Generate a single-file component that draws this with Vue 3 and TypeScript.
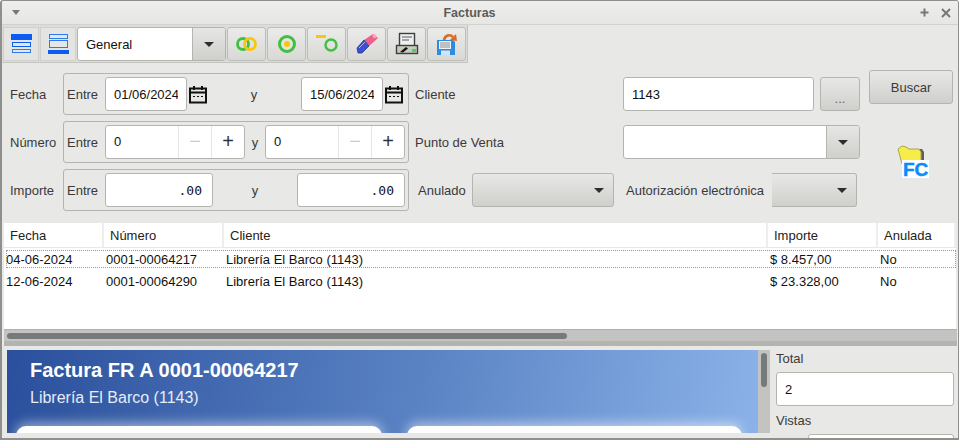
<script setup lang="ts">
const columns = [
  { label: 'Fecha', width: 100 },
  { label: 'Número', width: 120 },
  { label: 'Cliente', width: 544 },
  { label: 'Importe', width: 110 },
  { label: 'Anulada', width: 78 }
]

const rows = [
  { fecha: '04-06-2024', numero: '0001-00064217', cliente: 'Librería El Barco (1143)', importe: '$ 8.457,00', anulada: 'No', focus: true },
  { fecha: '12-06-2024', numero: '0001-00064290', cliente: 'Librería El Barco (1143)', importe: '$ 23.328,00', anulada: 'No', focus: false }
]
</script>

<template>
  <div class="window">
    <header class="titlebar">
      <svg class="menu-arrow" width="10" height="6" viewBox="0 0 10 6"><path d="M1 0h8L5 5z" fill="#77786f" /></svg>
      <span class="title">Facturas</span>
      <span class="win-btn">
        <svg width="9" height="9" viewBox="0 0 9 9"><path d="M4.500 0.500v8M0.500 4.500h8" stroke="#777874" stroke-width="2" /></svg>
      </span>
      <span class="win-btn">
        <svg width="10" height="10" viewBox="0 0 10 10"><path d="M1 1l8 8M9 1l-8 8" stroke="#777874" stroke-width="2" /></svg>
      </span>
    </header>

    <div class="toolbar">
      <button class="tool tool-view">
        <svg width="23" height="22" viewBox="0 0 23 22">
          <rect x="1" y="1" width="21" height="6" fill="#0a5df0" />
          <rect x="2.500" y="9.500" width="18" height="4" fill="#e6e6e4" stroke="#0a5df0" />
          <rect x="2.500" y="16.500" width="18" height="3" fill="#e6e6e4" stroke="#2a7bf0" />
        </svg>
      </button>
      <button class="tool tool-view">
        <svg width="23" height="22" viewBox="0 0 23 22">
          <rect x="2.500" y="1.500" width="18" height="4" fill="#e6e6e4" stroke="#2a7bf0" />
          <rect x="2.500" y="7.500" width="18" height="7" fill="#e6e6e4" stroke="#2a7bf0" />
          <rect x="1" y="17" width="21" height="4" fill="#0a5df0" />
        </svg>
      </button>
      <div class="combo toolbar-combo">
        <span class="combo-text">General</span>
        <span class="combo-arrow"><i class="arrow"></i></span>
      </div>
      <button class="tool">
        <svg width="24" height="18" viewBox="0 0 24 18">
          <circle cx="8" cy="9" r="5.500" fill="none" stroke="#3fc03f" stroke-width="2.800" />
          <circle cx="15" cy="9" r="5.500" fill="none" stroke="#f7c70f" stroke-width="2.800" />
        </svg>
      </button>
      <button class="tool">
        <svg width="20" height="20" viewBox="0 0 20 20">
          <circle cx="10" cy="10" r="7.500" fill="#e4e4e1" stroke="#3fc03f" stroke-width="3" />
          <circle cx="10" cy="10" r="3" fill="#f7c70f" />
        </svg>
      </button>
      <button class="tool">
        <svg width="24" height="20" viewBox="0 0 24 20">
          <rect x="1" y="1" width="10" height="3" fill="#f7c70f" />
          <circle cx="16" cy="11" r="5.500" fill="none" stroke="#3fc03f" stroke-width="2.400" />
        </svg>
      </button>
      <button class="tool">
        <svg width="24" height="22" viewBox="0 0 24 22">
          <path d="M9 7L18 1l5 4-9 8z" fill="#ee5f8a" />
          <path d="M17 2.500l3 -1.500 2 3-3 1.500z" fill="#f8a8c0" />
          <path d="M2 15l7-8 5 6-7 7H3z" fill="#3b4fd0" stroke="#26349a" stroke-width="0.800" />
          <path d="M4 15l6-6" stroke="#aab6f0" />
        </svg>
      </button>
      <button class="tool">
        <svg width="24" height="24" viewBox="0 0 24 24">
          <rect x="4.500" y="1.500" width="15" height="13" fill="#eef0f0" stroke="#3e3e3c" stroke-width="1.400" />
          <path d="M7 5h10M7 8h7" stroke="#8a8d8e" stroke-width="1.500" />
          <rect x="1.500" y="13.500" width="21" height="8" fill="#c9cabc" stroke="#3e3e3c" stroke-width="1.400" />
          <path d="M5 20l6-5 2 1.500-5 4z" fill="#111" />
          <rect x="17" y="17" width="4" height="3" fill="#43d16a" />
        </svg>
      </button>
      <button class="tool">
        <svg width="24" height="24" viewBox="0 0 24 24">
          <path d="M2 8h16l2 2v13H2z" fill="#2d8be0" />
          <rect x="4" y="9" width="12" height="8" fill="#f1f3f3" />
          <path d="M5 11h10M5 13h10M5 15h10" stroke="#8a8d8e" />
          <rect x="6" y="18.500" width="9" height="4.500" fill="#cfe4f7" />
          <path d="M9 8C10 3 15 2 18 5" fill="none" stroke="#dd6a1e" stroke-width="2.600" />
          <path d="M15 8l7 1-1-7z" fill="#dd6a1e" />
        </svg>
      </button>
    </div>

    <section class="filters">
      <div class="filter-rows">
        <div class="filter-row">
          <label class="lbl">Fecha</label>
          <div class="group dates">
            <span class="lbl entre">Entre</span>
            <div class="date-field">
              <input class="input date" value="01/06/2024" />
              <svg class="cal" width="18" height="19" viewBox="0 0 18 19">
                <path d="M1 3.500h16v14H1zM1 7.500h16" fill="none" stroke="#111" stroke-width="2" />
                <path d="M5 1v4M13 1v4" stroke="#111" stroke-width="2" />
                <path d="M4 11.500h2M8 11.500h2M12 11.500h2" stroke="#111" />
              </svg>
            </div>
            <span class="lbl y">y</span>
            <div class="date-field">
              <input class="input date" value="15/06/2024" />
              <svg class="cal" width="18" height="19" viewBox="0 0 18 19">
                <path d="M1 3.500h16v14H1zM1 7.500h16" fill="none" stroke="#111" stroke-width="2" />
                <path d="M5 1v4M13 1v4" stroke="#111" stroke-width="2" />
                <path d="M4 11.500h2M8 11.500h2M12 11.500h2" stroke="#111" />
              </svg>
            </div>
          </div>
        </div>
        <div class="filter-row">
          <label class="lbl">Número</label>
          <div class="group">
            <span class="lbl entre">Entre</span>
            <div class="spin">
              <span class="spin-val">0</span>
              <span class="spin-btn off">−</span>
              <span class="spin-btn">+</span>
            </div>
            <span class="lbl y-tight">y</span>
            <div class="spin">
              <span class="spin-val">0</span>
              <span class="spin-btn off">−</span>
              <span class="spin-btn">+</span>
            </div>
          </div>
        </div>
        <div class="filter-row">
          <label class="lbl">Importe</label>
          <div class="group">
            <span class="lbl entre">Entre</span>
            <input class="input amount" value=".00" />
            <span class="lbl y">y</span>
            <input class="input amount" value=".00" />
          </div>
        </div>
      </div>

      <div class="filter-side">
        <div class="side-row">
          <label class="lbl side-lbl">Cliente</label>
          <input class="input client" value="1143" />
          <button class="btn dots">...</button>
        </div>
        <div class="side-row">
          <label class="lbl side-lbl">Punto de Venta</label>
          <div class="combo pv">
            <span class="combo-text"></span>
            <span class="combo-arrow"><i class="arrow"></i></span>
          </div>
        </div>
        <div class="side-row">
          <label class="lbl anulado">Anulado</label>
          <div class="btn select anul"><i class="arrow"></i></div>
          <label class="lbl auto">Autorización electrónica</label>
          <div class="btn select aut"><i class="arrow"></i></div>
        </div>
      </div>

      <div class="filter-action">
        <button class="btn buscar">Buscar</button>
        <svg class="fc" width="34" height="34" viewBox="0 0 34 34">
          <path d="M21 4h4l2 3v10h-6z" fill="#5e5e58" />
          <path d="M1 4l4-3 4 1 3 2 10 0 2 3v12H5z" fill="#f6ec4a" stroke="#aaa450" />
          <rect x="5" y="15" width="27" height="18" fill="#fff" />
          <text x="6" y="31" class="fc-text">FC</text>
        </svg>
      </div>
    </section>

    <section class="table">
      <div class="thead">
        <div v-for="col in columns" :key="col.label" class="th" :style="{ width: col.width + 'px' }">{{ col.label }}</div>
      </div>
      <div class="tbody">
        <div v-for="row in rows" :key="row.numero" class="tr" :class="{ focus: row.focus }">
          <div class="td" :style="{ width: columns[0].width + 'px' }">{{ row.fecha }}</div>
          <div class="td" :style="{ width: columns[1].width + 'px' }">{{ row.numero }}</div>
          <div class="td" :style="{ width: columns[2].width + 'px' }">{{ row.cliente }}</div>
          <div class="td" :style="{ width: columns[3].width + 'px' }">{{ row.importe }}</div>
          <div class="td" :style="{ width: columns[4].width - 2 + 'px' }">{{ row.anulada }}</div>
        </div>
      </div>
    </section>
    <div class="hscroll"><div class="hthumb"></div></div>

    <section class="bottom">
      <div class="preview">
        <h1>Factura FR A 0001-00064217</h1>
        <p>Librería El Barco (1143)</p>
        <div class="cards">
          <div class="card first"></div>
          <div class="card second"></div>
        </div>
      </div>
      <div class="vscroll"><div class="vthumb"></div></div>
      <aside class="side">
        <label class="lbl">Total</label>
        <input class="input total" value="2" />
        <label class="lbl vistas">Vistas</label>
        <div class="input vistas-box"></div>
      </aside>
    </section>
  </div>
</template>

<style>
html, body {
  margin: 0;
  height: 100%;
  overflow: hidden;
  background: #fff;
}
</style>

<style scoped>
* {
  box-sizing: border-box;
}

.window {
  width: 959px;
  height: 440px;
  overflow: hidden;
  display: flex;
  flex-direction: column;
  background: #e8e8e6;
  border: 1px solid #8f8f8d;
  border-left-width: 2px;
  border-bottom-width: 2px;
  border-radius: 3px 3px 0 0;
  font-family: "Liberation Sans", Arial, sans-serif;
  font-size: 13px;
  color: #3a3a3a;
}

.titlebar {
  height: 24px;
  flex: none;
  display: flex;
  align-items: center;
  padding: 0 2px 0 9px;
  background: linear-gradient(#eeeeec, #e6e6e4);
  border-bottom: 1px solid #d2d2ce;
}

.title {
  flex: 1;
  text-align: center;
  font-size: 12.500px;
  font-weight: bold;
  color: #5c5c58;
  padding-left: 18px;
  padding-right: 14px;
}

.win-btn {
  width: 21px;
  display: flex;
  justify-content: center;
}

.toolbar {
  flex: none;
  width: 466px;
  height: 38px;
  display: flex;
  align-items: stretch;
  padding: 2px 1px 1px 1px;
  background: #dcdcd9;
  border-bottom: 1px solid #c4c4c0;
  border-right: 1px solid #c4c4c0;
  gap: 1px;
}

button {
  font: inherit;
  color: inherit;
  margin: 0;
}

.tool {
  width: 39px;
  padding: 0;
  display: flex;
  align-items: center;
  justify-content: center;
  background: linear-gradient(#ebebe9, #d8d8d5);
  border: 1px solid #bdbdb9;
  border-radius: 3px;
}

.tool-view {
  width: 36px;
  background: #e4e4e2;
  border-color: #d0d0cc;
  border-radius: 0;
}

.combo {
  display: flex;
  align-items: stretch;
  background: #fff;
  border: 1px solid #b4b4b0;
  border-radius: 3px;
}

.toolbar-combo {
  width: 149px;
  color: #111;
}

.toolbar-combo .combo-text {
  line-height: 33px;
}

.toolbar-combo .arrow {
  margin-top: 1px;
}

.combo-text {
  flex: 1;
  padding-left: 8px;
  line-height: 32px;
}

.combo-arrow {
  width: 33px;
  display: flex;
  align-items: center;
  justify-content: center;
  background: linear-gradient(#e6e6e4, #cfcfcc);
  border-left: 1px solid #b4b4b0;
  border-radius: 0 2px 2px 0;
}

.arrow {
  display: block;
  width: 0;
  height: 0;
  border-left: 5px solid transparent;
  border-right: 5px solid transparent;
  border-top: 5px solid #2e2e2e;
}

.filters {
  flex: none;
  display: flex;
  height: 160px;
  padding-top: 8px;
}

.filter-rows {
  width: 407px;
  display: flex;
  flex-direction: column;
  gap: 6px;
  padding-top: 2px;
}

.filter-row {
  display: flex;
  align-items: center;
  height: 42px;
  padding-left: 8px;
}

.filter-row > .lbl {
  width: 53px;
}

.group {
  width: 346px;
  height: 42px;
  display: flex;
  align-items: center;
  border: 1px solid #b4b4b0;
  border-radius: 3px;
  padding: 0 3px;
}

.group.dates {
  padding-right: 5px;
}

.entre {
  width: 38px;
  flex: none;
}

.input {
  height: 34px;
  border: 1px solid #b4b4b0;
  border-radius: 3px;
  background: #fff;
  font: inherit;
  color: #111;
  padding: 0 8px;
  outline: none;
  display: block;
}

.date-field {
  display: flex;
  align-items: center;
  gap: 2px;
}

.date {
  width: 82px;
}

.cal {
  flex: none;
}

.y {
  flex: 1;
  text-align: center;
}

.y-tight {
  width: 20px;
  text-align: center;
  flex: none;
}

.spin {
  flex: none;
  width: 140px;
  height: 34px;
  display: flex;
  background: #fff;
  border: 1px solid #b4b4b0;
  border-radius: 3px;
  color: #111;
}

.spin-val {
  flex: 1;
  padding-left: 8px;
  line-height: 32px;
}

.spin-btn {
  width: 33px;
  border-left: 1px solid #e4e4e2;
  text-align: center;
  font-size: 20px;
  line-height: 30px;
  color: #333;
}

.spin-btn.off {
  color: #ccc;
}

.amount {
  width: 108px;
  text-align: right;
  font-family: "DejaVu Sans Mono", "Liberation Mono", monospace;
  font-size: 13px;
  padding-right: 10px;
}

.filter-side {
  width: 448px;
  margin-left: 6px;
  display: flex;
  flex-direction: column;
  gap: 14px;
  padding-top: 6px;
}

.side-row {
  display: flex;
  align-items: center;
  height: 34px;
}

.side-lbl {
  width: 208px;
}

.client {
  width: 191px;
}

.btn {
  background: linear-gradient(#e8e8e6, #cfcfcc);
  border: 1px solid #b4b4b0;
  border-radius: 3px;
}

.dots {
  width: 40px;
  height: 34px;
  margin-left: 6px;
  padding: 8px 0 0;
  color: #666;
}

.pv {
  width: 237px;
  height: 34px;
}

.anulado {
  margin-left: 3px;
  width: 54px;
}

.select {
  height: 34px;
  display: flex;
  align-items: center;
  justify-content: flex-end;
  padding-right: 9px;
}

.anul {
  width: 142px;
}

.auto {
  margin-left: 12px;
  width: 146px;
  white-space: nowrap;
}

.aut {
  width: 85px;
  border-left: none;
  border-radius: 0 3px 3px 0;
}

.filter-action {
  width: 84px;
  margin-left: 6px;
  margin-top: -1px;
  display: flex;
  flex-direction: column;
  align-items: center;
}

.buscar {
  width: 84px;
  height: 34px;
  flex: none;
}

.fc {
  margin-top: 41px;
  margin-left: 6px;
}

.fc-text {
  font-family: "Liberation Sans", sans-serif;
  font-weight: bold;
  font-size: 19px;
  fill: #0a8cff;
  stroke: #0a8cff;
  stroke-width: 0.5px;
}

.table {
  flex: none;
  height: 106px;
  margin-left: 2px;
  width: 952px;
  background: #fff;
  color: #111;
  overflow: hidden;
}

.thead {
  display: flex;
  height: 25px;
  border-bottom: 1px solid #e8e8e6;
}

.th {
  padding-left: 6px;
  line-height: 25px;
  border-right: 2px solid #eeeeec;
  color: #222;
}

.tbody {
  padding-top: 2px;
}

.tr {
  display: flex;
  width: 950px;
  height: 18px;
  line-height: 17px;
  margin: 0 0 5px 2px;
}

.tr.focus {
  line-height: 19px;
  outline: 1px dotted #999;
  outline-offset: -1px;
}

.td {
  flex: none;
  white-space: nowrap;
}

.hscroll {
  flex: none;
  height: 17px;
  margin-left: 2px;
  width: 953px;
  padding: 3px;
  background: linear-gradient(#c3c4c2 11px, #b3b3af 11px);
  border-top: 1px solid #b0b0ae;
}

.hthumb {
  width: 560px;
  height: 6px;
  border-radius: 3px;
  background: #777a7a;
}

.bottom {
  flex: 1;
  min-height: 0;
  display: flex;
  padding: 4px 3px 5px 5px;
}

.preview {
  width: 751px;
  height: 83px;
  overflow: hidden;
  padding: 7px 23px 0;
  background: linear-gradient(100deg, #2a4f9c 0%, #5a83c4 55%, #8bb2e8 100%);
  color: #fff;
}

.preview h1 {
  margin: 0;
  font-size: 20px;
  line-height: 26px;
  font-weight: bold;
}

.preview p {
  margin: 5px 0 0;
  font-size: 16px;
  line-height: 20px;
  color: #e6edf7;
}

.cards {
  display: flex;
  gap: 25px;
  margin: 18px 0 0 -14px;
}

.card {
  flex: none;
  height: 40px;
  background: #fff;
  border-radius: 10px;
  box-shadow: 0 -3px 12px rgba(255, 255, 255, 0.5);
}

.first {
  width: 366px;
}

.second {
  width: 335px;
}

.vscroll {
  width: 12px;
  height: 83px;
  padding: 3px;
  background: #c3c4c2;
}

.vthumb {
  width: 6px;
  height: 34px;
  border-radius: 3px;
  background: #777a7a;
}

.side {
  flex: 1;
  margin-left: 6px;
  padding-top: 1px;
  display: flex;
  flex-direction: column;
  align-items: flex-start;
}

.side .lbl {
  line-height: 16px;
}

.total {
  width: 178px;
  margin-top: 5px;
  flex: none;
}

.vistas {
  margin-top: 7px;
}

.vistas-box {
  flex: none;
  width: 146px;
  margin: 5px 0 0 32px;
}
</style>
